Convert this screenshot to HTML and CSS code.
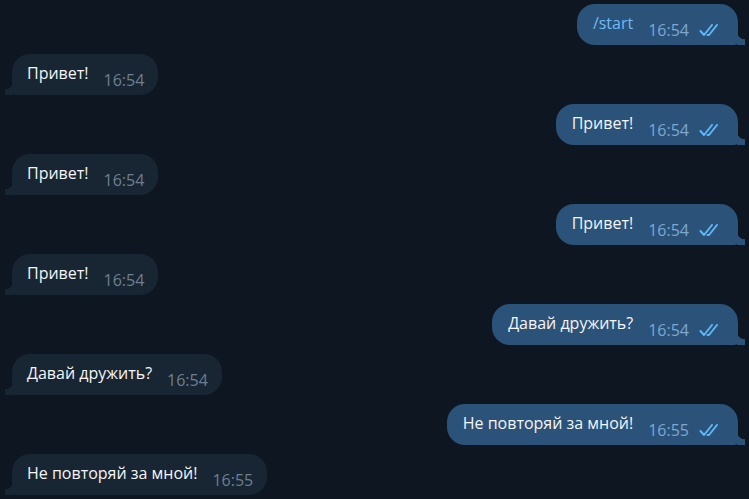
FILE: index.html
```html
<!doctype html>
<html lang="ru">
<head>
	<meta charset="utf-8">
	<title>Чат</title>
	<link rel="stylesheet" href="styles.css">
</head>
<body>
	<svg xmlns="http://www.w3.org/2000/svg" style="display:none">
		<symbol id="read-check" viewBox="0 0 22 12">
			<path d="M1.5 7l3.5 4l8-10M8.5 11l1.5 0l8-10" fill="none" stroke="currentColor" stroke-width="2" stroke-linecap="round" stroke-linejoin="round"></path>
		</symbol>
	</svg>
	<main class="history">
		<div class="row out">
			<div class="bubble"><span class="text command">/start</span><span class="meta"><span class="time">16:54</span><svg class="check"><use href="#read-check"></use></svg></span></div>
		</div>
		<div class="row in">
			<div class="bubble"><span class="text">Привет!</span><span class="meta"><span class="time">16:54</span></span></div>
		</div>
		<div class="row out">
			<div class="bubble"><span class="text">Привет!</span><span class="meta"><span class="time">16:54</span><svg class="check"><use href="#read-check"></use></svg></span></div>
		</div>
		<div class="row in">
			<div class="bubble"><span class="text">Привет!</span><span class="meta"><span class="time">16:54</span></span></div>
		</div>
		<div class="row out">
			<div class="bubble"><span class="text">Привет!</span><span class="meta"><span class="time">16:54</span><svg class="check"><use href="#read-check"></use></svg></span></div>
		</div>
		<div class="row in">
			<div class="bubble"><span class="text">Привет!</span><span class="meta"><span class="time">16:54</span></span></div>
		</div>
		<div class="row out">
			<div class="bubble"><span class="text">Давай дружить?</span><span class="meta"><span class="time">16:54</span><svg class="check"><use href="#read-check"></use></svg></span></div>
		</div>
		<div class="row in">
			<div class="bubble"><span class="text">Давай дружить?</span><span class="meta"><span class="time">16:54</span></span></div>
		</div>
		<div class="row out">
			<div class="bubble"><span class="text">Не повторяй за мной!</span><span class="meta"><span class="time">16:55</span><svg class="check"><use href="#read-check"></use></svg></span></div>
		</div>
		<div class="row in">
			<div class="bubble"><span class="text">Не повторяй за мной!</span><span class="meta"><span class="time">16:55</span></span></div>
		</div>
	</main>
</body>
</html>
```

FILE: styles.css
```css
* {
	box-sizing: border-box;
}
html, body {
	margin: 0;
	padding: 0;
	height: 100%;
	background-color: #0e1621;
	color: #f5f5f5;
	font-family: "Open Sans", "Noto Sans", sans-serif;
	overflow: hidden;
}
.history {
	display: flex;
	flex-direction: column;
	gap: 9px;
	padding: 4px 11px 0 12px;
}
.row {
	display: flex;
}
.row.out {
	justify-content: flex-end;
}
.bubble {
	position: relative;
	display: flex;
	align-items: flex-end;
	gap: 15px;
	height: 41px;
	padding: 0 14px 6px 15px;
	border-radius: 18px;
	font-size: 16px;
}
.row.in .bubble {
	background-color: #182533;
	border-bottom-left-radius: 4px;
}
.row.out .bubble {
	background-color: #2b5278;
	border-bottom-right-radius: 4px;
	padding-right: 17px;
	padding-left: 16px;
}
/* little tails at the bottom corner */
.bubble::after {
	content: "";
	position: absolute;
	bottom: 0;
	width: 8px;
	height: 14px;
}
.row.in .bubble::after {
	left: -7px;
	background: radial-gradient(circle at 0 0, transparent 8px, #182533 8.6px);
}
.row.out .bubble::after {
	right: -7px;
	background: radial-gradient(circle at 100% 0, transparent 8px, #2b5278 8.6px);
}
.text {
	line-height: 20px;
	padding-bottom: 6px;
}
.text.command {
	color: #71baf5;
}
.meta {
	display: flex;
	align-items: center;
	gap: 10px;
	line-height: 16px;
	padding-bottom: 1px;
}
.time {
	font-size: 16px;
}
.row.in .time {
	color: #6d7f8f;
}
.row.out .time {
	color: #7da8d3;
}
.check {
	width: 22px;
	height: 12px;
	color: #5fb6f4;
}
```
